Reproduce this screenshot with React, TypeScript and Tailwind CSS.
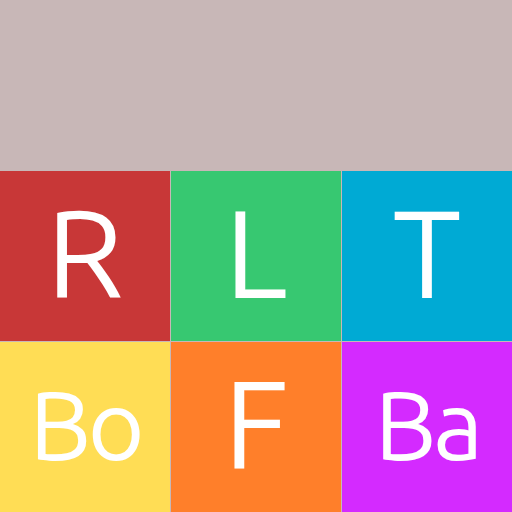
import React from 'react';

interface Tile {
  label: string;
  bg: string;
}

const tiles: Tile[] = [
  { label: 'R', bg: 'bg-[#c83737]' },
  { label: 'L', bg: 'bg-[#37c871]' },
  { label: 'T', bg: 'bg-[#00aad4]' },
  { label: 'Bo', bg: 'bg-[#ffdd55]' },
  { label: 'F', bg: 'bg-[#ff7f2a]' },
  { label: 'Ba', bg: 'bg-[#d42aff]' },
];

const App: React.FC = () => {
  return (
    <div className="w-[512px] h-[512px] flex flex-col bg-[#c8b7b7] font-['Ubuntu','Open_Sans',sans-serif] overflow-hidden">
      <div className="h-[171px] shrink-0" />
      <div className="grid grid-cols-3 grid-rows-[170px_170px] gap-px">
        {tiles.map((tile) => (
          <div key={tile.label} className={`${tile.bg} flex items-center justify-center`}>
            <span
              className={
                tile.label.length > 1
                  ? 'text-[98px] leading-none tracking-[-0.04em] text-white -translate-y-[3px]'
                  : 'text-[124px] leading-none text-white -translate-y-[4px]'
              }
            >
              {tile.label}
            </span>
          </div>
        ))}
      </div>
    </div>
  );
};

export default App;
